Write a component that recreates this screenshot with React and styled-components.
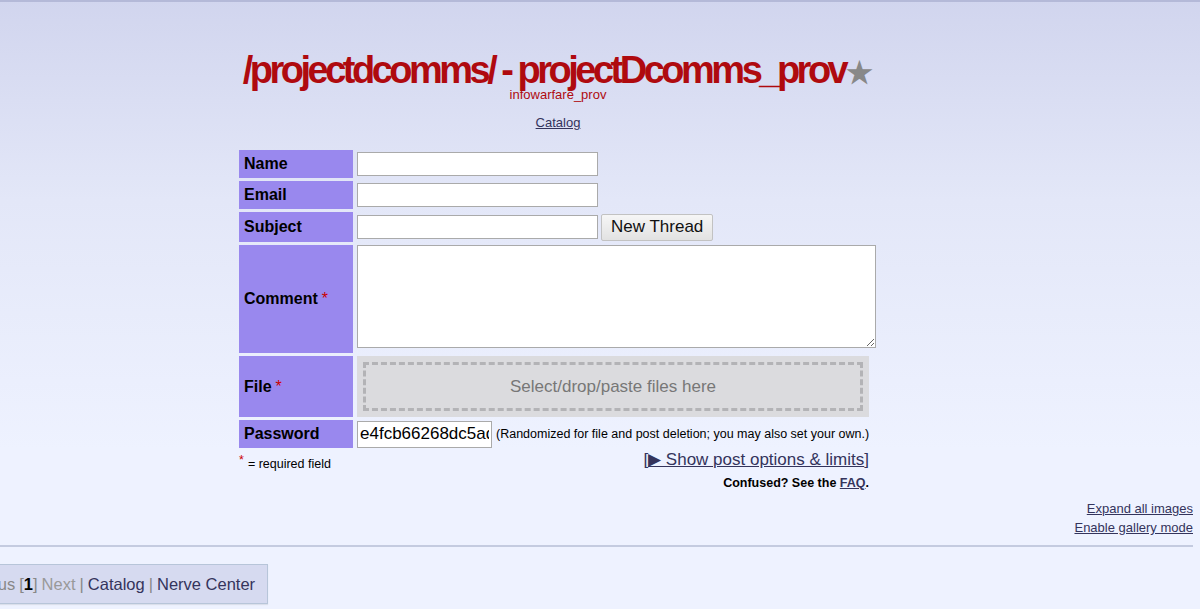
import styled, { createGlobalStyle } from "styled-components";

const GlobalStyle = createGlobalStyle`
  html, body {
    margin: 0;
    padding: 0;
  }
  body {
    font-family: "Liberation Sans", Arial, sans-serif;
    background: linear-gradient(#d1d5ee 0, #e3e7f8 200px, #eef2ff 450px) #eef2ff;
    color: #000;
    min-height: 609px;
    overflow: hidden;
  }
`;

const Page = styled.div`
  border-top: 2px solid #b4b9d8;
  padding-right: 7px;
`;

const Column = styled.div`
  width: 1116px;
  display: flex;
  flex-direction: column;
  align-items: center;
`;

const Title = styled.h1`
  margin: 50px 0 0;
  font-size: 38px;
  line-height: 36px;
  font-weight: 700;
  letter-spacing: -3.5px;
  color: #af0a0f;
  white-space: nowrap;
`;

const Star = styled.span`
  color: #888;
  letter-spacing: 0;
  font-size: 30px;
  margin-left: 1px;
`;

const Subtitle = styled.div`
  margin-top: -3px;
  font-size: 13px;
  line-height: 14px;
  color: #af0a0f;
`;

const Link = styled.a`
  color: #34345c;
  text-decoration: underline;
  font-size: ${(p) => p.size || 13}px;
  font-weight: ${(p) => (p.bold ? 700 : 400)};
`;

const CatalogLine = styled.div`
  margin-top: 13px;
  font-size: 13px;
  line-height: 16px;
`;

const PostForm = styled.div`
  margin-top: 19px;
  width: 638px;
`;

const Grid = styled.div`
  display: grid;
  grid-template-columns: 114px 520px;
  column-gap: 4px;
  row-gap: 3px;
`;

const Label = styled.div`
  background: #9988ee;
  height: ${(p) => p.h}px;
  display: flex;
  align-items: center;
  padding-left: 5px;
  font-size: 16px;
  font-weight: 700;
`;

const Req = styled.span`
  color: #c00;
  font-weight: 400;
  margin-left: 4px;
`;

const Cell = styled.div`
  display: flex;
  align-items: ${(p) => (p.top ? "flex-start" : "center")};
  gap: 3px;
`;

const TextInput = styled.input`
  box-sizing: border-box;
  width: ${(p) => p.w}px;
  height: ${(p) => p.hgt || 24}px;
  border: 1px solid #aaa;
  background: #fff;
  font-family: "Liberation Sans", Arial, sans-serif;
  font-size: 17px;
  padding: 0 2px;
  margin: 0;
  outline: none;
`;

const Button = styled.button`
  height: 27px;
  padding: 0 9px;
  border: 1px solid #c2c2c2;
  border-radius: 2px;
  background: linear-gradient(#f6f6f6, #e2e2e2);
  font-family: "Liberation Sans", Arial, sans-serif;
  font-size: 17px;
  color: #111;
`;

const Comment = styled.textarea`
  box-sizing: border-box;
  width: 519px;
  height: 103px;
  border: 1px solid #aaa;
  margin: 0;
  resize: both;
  font-family: "Liberation Sans", Arial, sans-serif;
`;

const DropZone = styled.div`
  box-sizing: border-box;
  width: 512px;
  height: 61px;
  background: #dbdbde;
  padding: 6px;
  display: flex;
`;

const DropInner = styled.div`
  flex: 1;
  border: 3px dashed #b3b3b6;
  display: flex;
  align-items: center;
  justify-content: center;
  font-size: 17px;
  color: #777;
`;

const Note = styled.span`
  font-size: 12.5px;
  margin-left: 1px;
  white-space: nowrap;
`;

const FooterRow = styled.div`
  display: flex;
  justify-content: space-between;
  align-items: center;
  padding-right: 8px;
  margin-top: ${(p) => p.mt || 0}px;
`;

const RequiredNote = styled.div`
  font-size: 12.5px;
  padding-top: 5px;
`;

const Sup = styled.span`
  color: #c00;
  vertical-align: 4px;
  margin-right: 4px;
`;

const Bracket = styled.span`
  font-size: 17px;
  color: #34345c;
`;

const Confused = styled.div`
  margin-left: auto;
  font-size: 12.5px;
  font-weight: 700;
`;

const SideLinks = styled.div`
  margin-top: 11px;
  display: flex;
  flex-direction: column;
  align-items: flex-end;
  gap: 3px;
  line-height: 16px;
`;

const Divider = styled.hr`
  margin: 9px 0 0;
  border: none;
  border-top: 2px solid #c4cbe0;
`;

const Pager = styled.div`
  display: inline-flex;
  align-items: center;
  gap: 4px;
  margin: 17px 0 0 -58px;
  height: 38px;
  padding: 0 12px 0 9px;
  background: #d6daf0;
  border: 1px solid #b7c5d9;
  border-left: none;
  box-shadow: 0 1px 1px rgba(0, 0, 0, 0.08);
  font-size: 16.5px;
  color: #888;
  white-space: nowrap;
`;

const PagerLink = styled.span`
  color: ${(p) => (p.muted ? "#999" : "#34345c")};
`;

const Current = styled.b`
  color: #000;
`;

export default function App() {
  return (
    <>
      <GlobalStyle />
      <Page>
        <Column>
          <Title>
            /projectdcomms/ - projectDcomms_prov<Star>★</Star>
          </Title>
          <Subtitle>infowarfare_prov</Subtitle>
          <CatalogLine>
            <Link>Catalog</Link>
          </CatalogLine>

          <PostForm>
            <Grid>
              <Label h={28}>Name</Label>
              <Cell>
                <TextInput w={241} />
              </Cell>
              <Label h={28}>Email</Label>
              <Cell>
                <TextInput w={241} />
              </Cell>
              <Label h={30}>Subject</Label>
              <Cell>
                <TextInput w={241} />
                <Button>New Thread</Button>
              </Cell>
              <Label h={108}>
                Comment<Req>*</Req>
              </Label>
              <Cell top>
                <Comment />
              </Cell>
              <Label h={61}>
                File<Req>*</Req>
              </Label>
              <Cell top>
                <DropZone>
                  <DropInner>Select/drop/paste files here</DropInner>
                </DropZone>
              </Cell>
              <Label h={28}>Password</Label>
              <Cell>
                <TextInput w={135} hgt={27} defaultValue="e4fcb66268dc5ad4" />
                <Note>
                  (Randomized for file and post deletion; you may also set your
                  own.)
                </Note>
              </Cell>
            </Grid>

            <FooterRow>
              <RequiredNote>
                <Sup>*</Sup>= required field
              </RequiredNote>
              <Bracket>
                [<Link size={17}>▶ Show post options &amp; limits</Link>]
              </Bracket>
            </FooterRow>
            <FooterRow mt={5}>
              <Confused>
                Confused? See the <Link size={12.5} bold>FAQ</Link>.
              </Confused>
            </FooterRow>
          </PostForm>
        </Column>

        <SideLinks>
          <Link>Expand all images</Link>
          <Link>Enable gallery mode</Link>
        </SideLinks>
        <Divider />

        <Pager>
          <span>Previous</span>
          <span>
            [<Current>1</Current>]
          </span>
          <PagerLink muted>Next</PagerLink>
          <span>|</span>
          <PagerLink>Catalog</PagerLink>
          <span>|</span>
          <PagerLink>Nerve Center</PagerLink>
        </Pager>
      </Page>
    </>
  );
}
